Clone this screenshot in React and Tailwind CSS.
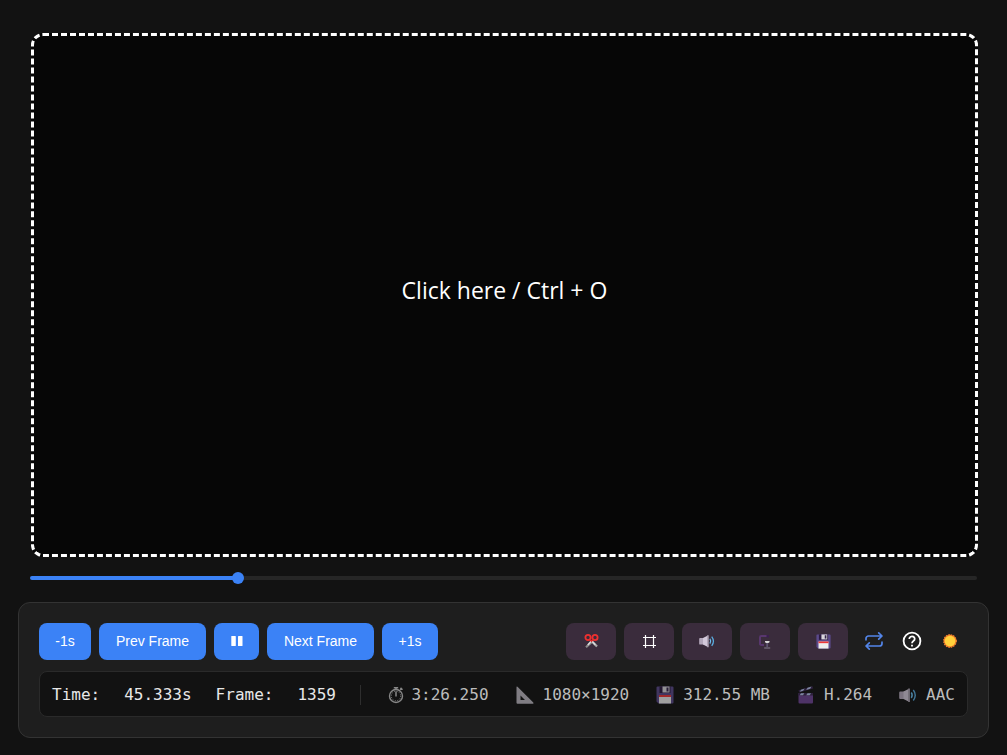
import { useState } from 'react';

function Scissors() {
  return (
    <svg viewBox="0 0 16 16" className="h-4 w-4" aria-hidden="true" fill="none">
      <path d="M9 8.5 14 13.6" stroke="#a9a9a9" strokeWidth="2.2" />
      <path d="M9.4 8.4 3 14.2" stroke="#8d8d8d" strokeWidth="2.2" />
      <path d="M8.5 7.8 4.8 12M8.5 7.8l3.8 4" stroke="#dcdcdc" strokeWidth="1.4" />
      <circle cx="5" cy="4.5" r="2.6" stroke="#ee3030" strokeWidth="1.8" />
      <circle cx="12" cy="4.5" r="2.6" stroke="#ee3030" strokeWidth="1.8" />
      <path d="M6.8 6.5 8.5 8.2 10.2 6.5" stroke="#d92828" strokeWidth="1.6" />
    </svg>
  );
}

function CropGrid() {
  return (
    <svg viewBox="0 0 16 16" className="h-4 w-4" aria-hidden="true" fill="none">
      <path d="M4.5 2v13M12.5 2v13M2 4.500h13M2 12.500h13" stroke="#fff" strokeWidth="1.200" />
    </svg>
  );
}

function Speaker({ className }) {
  return (
    <svg viewBox="0 0 18 18" className={className} aria-hidden="true" fill="none">
      <path d="M1.200 5.500H5.500v7.500H1.200a1 1 0 0 1-1-1V6.500a1 1 0 0 1 1-1Z" fill="#b3a8bb" />
      <path d="M4.500 5.500 9.500 3v12.500l-5-2.500Z" fill="#d3c9da" />
      <path d="M9.300 2.500h1.500v13.500H9.300Z" fill="#c4bacb" />
      <path d="M12.300 6.500q1.800 2.800 0 5.500" stroke="#6cc0f0" strokeWidth="1.400" />
      <path d="M14.300 4q3.900 5.200 0 10.500" stroke="#5aaee2" strokeWidth="1.400" />
    </svg>
  );
}

function Clamp() {
  return (
    <svg viewBox="0 0 16 16" className="h-4 w-4" aria-hidden="true" fill="none">
      <path d="M11.500 3H4.300A1.300 1.300 0 0 0 3 4.300v6.400A1.300 1.300 0 0 0 4.300 12H7" stroke="#58376e" strokeWidth="2" />
      <path d="M9.500 2h2.500v2.500H9.500Z" fill="#3b1e50" />
      <path d="M8 8h4.500v1.300l-1.200.700H9.200L8 9.300Z" fill="#d8d8d8" />
      <path d="M10.200 10v4" stroke="#5d5470" strokeWidth="1.800" />
      <path d="M7.200 15h6" stroke="#7b7482" strokeWidth="1.200" />
    </svg>
  );
}

function Floppy({ className }) {
  return (
    <svg viewBox="0 0 18 18" className={className} aria-hidden="true">
      <path d="M1.500.500h15a1 1 0 0 1 1 1v15a1 1 0 0 1-1 1H2.500l-2-2v-14a1 1 0 0 1 1-1Z" fill="#5b4a8b" />
      <path d="M3.500.500h11v6.500h-11Z" fill="#2c1b41" />
      <path d="M6.500.500h7v6h-7Z" fill="#d9d6dc" />
      <path d="M10.500 1.500h2v4h-2Z" fill="#33244a" />
      <path d="M3 9h12v8.500H3Z" fill="#ededed" />
      <path d="M3 9h12v2H3Z" fill="#ee3737" />
    </svg>
  );
}

function Stopwatch() {
  return (
    <svg viewBox="0 0 16 18" className="mr-[7px] h-[18px] w-4" aria-hidden="true" fill="none" stroke="#d6d6d6">
      <circle cx="8" cy="10" r="6.500" strokeWidth="1.400" />
      <circle cx="8" cy="10" r="4.700" strokeWidth="1" strokeDasharray="1 1.460" />
      <path d="M8 5.500v5M5.800 1.700h4.400M8 1.500v2M12.200 3.800l1.500-1.500M12.500 1.900l2 1.800" strokeWidth="1.500" />
    </svg>
  );
}

function Triangle() {
  return (
    <svg viewBox="0 0 18 18" className="mr-[9px] h-[18px] w-[18px]" aria-hidden="true">
      <path fillRule="evenodd" d="M.500 1.200Q.500 0 1.500.800L17.300 16.500Q18 17.800 16.800 17.800H1.500a1 1 0 0 1-1-1ZM4.500 9.500v4.500h4.500Z" fill="#c9c5cf" />
    </svg>
  );
}

function Clapper() {
  return (
    <svg viewBox="0 0 18 18" className="mr-[9px] h-[18px] w-[18px]" aria-hidden="true">
      <path d="M1.500 7h14.500v9.500a1 1 0 0 1-1 1h-12.500a1 1 0 0 1-1-1Z" fill="#68418b" />
      <path d="M1.500 7h14.500v2.500h-14.500Z" fill="#39264f" />
      <path d="M1.500 4.200 15.500.300l.700 2.300L2.200 6.500Z" fill="#39264f" />
      <path d="m4 3.700 3.700-1.100-1.500 2.200-3.400 1ZM10.500 1.800l4-1.200-1.300 2.100-4 1.200ZM4 7.200h3.300L6 9.200H2.700ZM10.500 7.200h3.500l-1.300 2H9.200Z" fill="#a9b6dc" />
    </svg>
  );
}

function Repeat() {
  return (
    <svg viewBox="0 0 20 20" className="h-5 w-5" aria-hidden="true" fill="none" stroke="#5385e9" strokeWidth="1.700" strokeLinecap="round" strokeLinejoin="round">
      <path d="M2 8.800V7.500A2.500 2.500 0 0 1 4.500 5H17.500M14.700 1.800 18 5l-3.300 3.200" />
      <path d="M18 11.200v1.300a2.500 2.500 0 0 1-2.500 2.500H2.500M5.300 11.800 2 15l3.300 3.200" />
    </svg>
  );
}

function Help() {
  return (
    <svg viewBox="0 0 20 20" className="h-5 w-5" aria-hidden="true" fill="none" stroke="#fff" strokeWidth="1.800">
      <circle cx="10" cy="10" r="8.400" />
      <path d="M7.300 7.900a2.700 2.500 0 1 1 4.100 2.100c-1 .700-1.400 1.100-1.400 2.300" />
      <path d="M10 13.700v1.900" />
    </svg>
  );
}

function Sun() {
  return (
    <svg viewBox="0 0 16 16" className="h-4 w-4" aria-hidden="true">
      <circle cx="8" cy="8" r="6.200" fill="#f8842d" />
      <circle cx="8" cy="8" r="6.200" fill="none" stroke="#f8842d" strokeWidth="1.400" strokeDasharray="1.400 1.035" />
      <circle cx="8" cy="8" r="5.300" fill="#ffd13b" />
    </svg>
  );
}

const primary =
  'flex h-[37px] items-center justify-center rounded-lg bg-[#3b82f6] pb-px text-sm text-white hover:bg-blue-600';
const tool = 'flex h-[37px] w-[50px] items-center justify-center rounded-lg bg-[#3a2c3c] pb-px hover:bg-[#49384b]';
const plain = 'flex h-[37px] w-9 items-center justify-center pb-px';

export default function App() {
  const [position, setPosition] = useState(216);
  const filled = `calc(6px + (100% - 12px) * ${position / 1000})`;

  return (
    <main className="flex min-h-screen flex-col bg-[#121212] px-[18px] pt-[33px] pb-[17px] font-['Liberation_Sans',Arial,sans-serif] text-white">
      <div className="flex grow flex-col pr-[11px] pl-[13px]">
        <button
          type="button"
          className="flex grow items-center justify-center rounded-xl border-[3px] border-dashed border-white bg-[#060606] pb-2.5 font-['Open_Sans','Noto_Sans',sans-serif] text-[23px]"
        >
          Click here / Ctrl + O
        </button>
      </div>

      <div className="mt-[13px] mb-4 flex px-3">
        <input
          type="range"
          aria-label="Playback position"
          min="0"
          max="1000"
          value={position}
          onChange={(e) => setPosition(Number(e.target.value))}
          style={{
            backgroundImage: `linear-gradient(to right, #3b82f6 ${filled}, #262626 ${filled})`,
          }}
          className="my-1.5 h-1 w-full appearance-none rounded-full [&::-webkit-slider-thumb]:h-3 [&::-webkit-slider-thumb]:w-3 [&::-webkit-slider-thumb]:appearance-none [&::-webkit-slider-thumb]:rounded-full [&::-webkit-slider-thumb]:bg-[#3b82f6]"
        />
      </div>

      <section className="flex flex-col gap-[11px] rounded-xl border border-[#333] bg-[#1e1e1e] p-5">
        <div className="flex items-center justify-between">
          <div className="flex gap-2">
            <button type="button" className={`${primary} w-[52px]`}>-1s</button>
            <button type="button" className={`${primary} w-[107px]`}>Prev Frame</button>
            <button type="button" aria-label="Pause" className={`${primary} w-[45px]`}>
              <svg viewBox="0 0 12 10" className="h-2.5 w-3" aria-hidden="true" fill="#fff">
                <rect x="0.3" width="4.5" height="10" rx="0.6" />
                <rect x="7" width="4.5" height="10" rx="0.6" />
              </svg>
            </button>
            <button type="button" className={`${primary} w-[107px]`}>Next Frame</button>
            <button type="button" className={`${primary} w-14`}>+1s</button>
          </div>
          <div className="flex items-center gap-2">
            <button type="button" aria-label="Cut" className={tool}><Scissors /></button>
            <button type="button" aria-label="Crop" className={tool}><CropGrid /></button>
            <button type="button" aria-label="Audio" className={tool}><Speaker className="h-4 w-4" /></button>
            <button type="button" aria-label="Compress" className={tool}><Clamp /></button>
            <button type="button" aria-label="Save" className={tool}><Floppy className="h-[15px] w-[15px]" /></button>
            <div className="flex gap-0.5">
              <button type="button" aria-label="Loop" className={plain}><Repeat /></button>
              <button type="button" aria-label="Help" className={plain}><Help /></button>
              <button type="button" aria-label="Light theme" className={plain}><Sun /></button>
            </div>
          </div>
        </div>

        <div className="flex h-[46px] items-center justify-between rounded-lg border border-[#2a2a2a] bg-[#121212] px-3 pt-px font-['DejaVu_Sans_Mono',monospace] text-base whitespace-pre">
          <div className="flex items-center gap-6 text-[#e8e8e8]">
            <span>Time:</span>
            <span>45.333s</span>
            <span>Frame:</span>
            <span>1359</span>
            <span className="h-5 w-px bg-[#2e2e2e]" />
          </div>
          <div className="flex items-center gap-[27px] text-[#bcbcbc]">
            <span className="flex items-center"><span className="opacity-60"><Stopwatch /></span>3:26.250</span>
            <span className="flex items-center"><span className="opacity-60"><Triangle /></span>1080×1920</span>
            <span className="flex items-center"><span className="opacity-65"><Floppy className="mr-[9px] h-[18px] w-[18px]" /></span>312.55 MB</span>
            <span className="flex items-center"><span className="opacity-70"><Clapper /></span>H.264</span>
            <span className="flex items-center"><span className="opacity-65"><Speaker className="mr-[9px] h-[18px] w-[18px]" /></span>AAC</span>
          </div>
        </div>
      </section>
    </main>
  );
}
